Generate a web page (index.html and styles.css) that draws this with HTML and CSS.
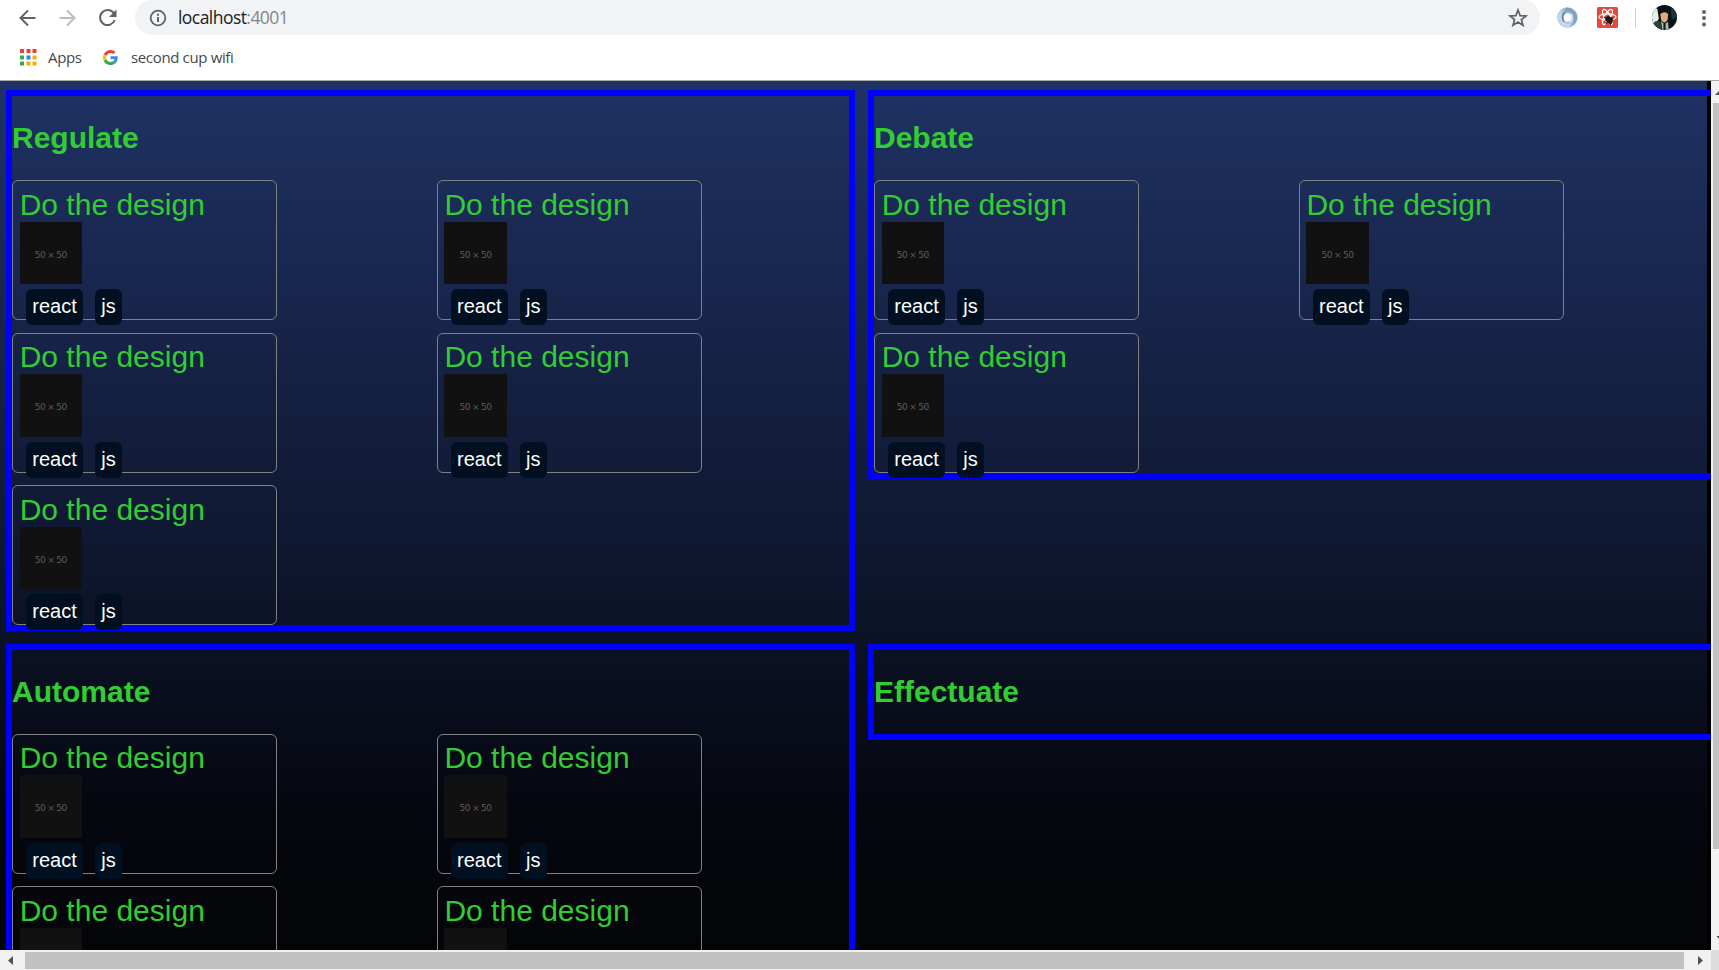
FILE: index.html
```html
<!DOCTYPE html>
<html lang="en">
<head>
<meta charset="utf-8">
<title>localhost:4001</title>
<link rel="stylesheet" href="styles.css">
</head>
<body>
<div class="browser">
  <header class="chrome">
    <div class="toolbar">
      <svg class="nav" viewBox="0 0 20 20"><path d="M18.500 10H4M11 2.500 3.500 10l7.500 7.500" fill="none" stroke="#5f6368" stroke-width="2"/></svg>
      <svg class="nav" viewBox="0 0 20 20"><path d="M2.500 10H17M10 2.500 17.500 10 10 17.500" fill="none" stroke="#babcbe" stroke-width="2"/></svg>
      <svg class="nav" viewBox="0 0 20 20"><path d="M16.700 5.200A7.500 7.500 0 1 0 17.700 12" fill="none" stroke="#5f6368" stroke-width="2"/><path d="M19.500 1.500V9H12z" fill="#5f6368"/></svg>
      <div class="omnibox">
        <svg class="info" viewBox="0 0 18 18"><circle cx="9" cy="9" r="7.300" fill="none" stroke="#5f6368" stroke-width="1.800"/><path d="M9 8v5M9 4.800v1.900" stroke="#5f6368" stroke-width="2"/></svg>
        <span class="url">localhost<span class="port">:4001</span></span>
        <svg class="star" viewBox="0 0 20 20"><path d="m10 2 2.100 5.600 6 .3-4.700 3.700 1.600 5.800-5-3.300-5 3.300 1.600-5.800L1.900 7.900l6-.3z" fill="none" stroke="#5f6368" stroke-width="1.700"/></svg>
      </div>
      <svg class="ext ring" viewBox="0 0 20 20"><circle cx="10" cy="10" r="6.900" fill="none" stroke="#a5bfd9" stroke-width="5.800"/><path d="M8 .8c6-1 11 3.500 11 9.200 0 3-1.500 6-4.500 7.700 2-3.700 2-9-1.500-12C11.500 4.200 9.500 4 7.500 4.600z" fill="#7ea1c6"/><path d="M12 19.200C6 20.200 1 15.700 1 10c0-3 1.500-6 4.500-7.700-2 3.700-2 9 1.500 12 1.500 1.500 3.500 1.700 5.500 1.100z" fill="#c6d7e8"/><path d="M6.500 14C4.500 11 5 7 8 4.500" fill="none" stroke="#527fb0" stroke-width="1.400"/><path d="M13.500 6c2 3 1.500 7-1.500 9.500" fill="none" stroke="#d8e4ef" stroke-width="1.200"/></svg>
      <svg class="ext" viewBox="0 0 21 21"><rect width="21" height="21" rx="1.500" fill="#e64a3b"/><g fill="none" stroke="#fff" stroke-width="1.200"><ellipse cx="10.500" cy="10" rx="8.500" ry="3.200"/><ellipse cx="10.500" cy="10" rx="8.500" ry="3.200" transform="rotate(60 10.500 10)"/><ellipse cx="10.500" cy="10" rx="8.500" ry="3.200" transform="rotate(120 10.500 10)"/></g><ellipse cx="12" cy="13" rx="3" ry="4.300" transform="rotate(-38 12 13)" fill="#231815"/><path d="m8 13 8-1M9 17l6-7M13 18l3-7M7 10l5 3" stroke="#231815" stroke-width="1.200"/></svg>
      <span class="divider"></span>
      <svg class="avatar" viewBox="0 0 24 24"><defs><clipPath id="face"><circle cx="12" cy="12" r="12"/></clipPath></defs><g clip-path="url(#face)"><path fill="#0b1114" d="M0 0h24v24H0z"/><path d="M0 5 5 3l1.500 10L4 18l-4-1z" fill="#e3efe8"/><path d="M18 3h6v9l-5 2z" fill="#17353b"/><path d="M8 9c1.500-2.500 6-3 7.500 0l-.5 5c-1 3.500-5 3.500-6.200.5z" fill="#e0ab78"/><path d="M8.500 15.500 12 18.500l3.500-2.500.5 8h-6z" fill="#a8b6ae"/><path d="M1 18c2-3 4-3 7-2l2 8H2z" fill="#2b4434"/><path d="M11 18h2v6h-2z" fill="#101719"/></g></svg>
      <svg class="dots" viewBox="0 0 6 18"><circle cx="3" cy="3" r="2" fill="#5f6368"/><circle cx="3" cy="9" r="2" fill="#5f6368"/><circle cx="3" cy="15.400" r="2" fill="#5f6368"/></svg>
    </div>
    <div class="bookmarks">
      <svg class="apps" viewBox="0 0 17 17"><path d="M0 0h4v4H0zM6.500 0h4v4h-4zM12.500 0h4v4h-4z" fill="#ea4335"/><path d="M0 6.500h4v4H0zM0 12.500h4v4H0z" fill="#34a853"/><path d="M6.500 6.500h4v4h-4z" fill="#1a8cf0"/><path d="M12.500 6.500h4v4h-4zM6.500 12.500h4v4h-4zM12.500 12.500h4v4h-4z" fill="#fbab05"/></svg>
      <span class="bm apps-label">Apps</span>
      <svg class="google" viewBox="0 0 48 48"><path fill="#ea4335" d="M24 9.500c3.500 0 6.700 1.200 9.200 3.600l6.900-6.900C35.900 2.400 30.500 0 24 0 14.600 0 6.500 5.400 2.600 13.200l8 6.200C12.400 13.700 17.700 9.500 24 9.500z"/><path fill="#4285f4" d="M47 24.600c0-1.600-.2-3.100-.4-4.600H24v9h12.900c-.6 3-2.300 5.500-4.800 7.200l7.700 6C44.400 38 47 31.800 47 24.600z"/><path fill="#fbbc05" d="M10.500 28.600a14.500 14.500 0 0 1 0-9.200l-8-6.200a24 24 0 0 0 0 21.600z"/><path fill="#34a853" d="M24 48c6.500 0 11.900-2.100 15.900-5.800l-7.700-6c-2.200 1.400-4.900 2.300-8.200 2.300-6.300 0-11.600-4.200-13.500-9.900l-8 6.200C6.500 42.600 14.600 48 24 48z"/></svg>
      <span class="bm wifi-label">second cup wifi</span>
    </div>
  </header>
  <div class="viewport">
    <main class="board" id="board"></main>
    <div class="vscroll">
      <svg class="vup" viewBox="0 0 8 22"><path d="M4 14l4-4v4z" fill="#505050"/></svg>
      <div class="vthumb"></div>
      <svg class="vdown" viewBox="0 0 8 22"><path d="M5.500 8H8v3z" fill="#505050"/></svg>
    </div>
  </div>
  <div class="hscroll">
    <svg class="harrow" viewBox="0 0 25 20"><path d="M13 6v9l-5-4.500z" fill="#505050"/></svg>
    <div class="hthumb"></div>
    <svg class="harrow right" viewBox="0 0 27 20"><path d="M14 6v9l5-4.500z" fill="#505050"/></svg>
    <div class="corner"></div>
  </div>
</div>
<script src="board.js"></script>
</body>
</html>
```
FILE: styles.css
```css
* { box-sizing: border-box; }
body { margin: 0; overflow: hidden; background: #fff; }
svg { display: block; flex: none; }
.browser { width: 1719px; height: 970px; display: flex; flex-direction: column; overflow: hidden; }

.chrome { height: 81px; flex: none; border-bottom: 1px solid #a9aaab; font-family: "Open Sans", "Noto Sans", sans-serif; }
.toolbar { height: 35px; display: flex; align-items: center; padding-left: 17px; }
.nav { width: 20px; height: 20px; margin-right: 20px; }
.omnibox { width: 1405px; height: 35px; margin-left: -2px; background: #f1f3f4; border-radius: 17.5px; display: flex; align-items: center; padding: 0 12.5px 0 14px; }
.info { width: 18px; height: 18px; }
.url { margin-left: 11px; flex: 1; font-size: 17.5px; line-height: 33px; padding-bottom: 1px; color: #202124; letter-spacing: -0.55px; }
.port { color: #80868b; }
.star { width: 20px; height: 20px; }
.ext { width: 21px; height: 21px; margin-left: 19px; }
.ring { margin-left: 17px; }
.divider { width: 1px; height: 20px; background: #cfd1d4; margin-left: 17px; }
.avatar { width: 25px; height: 25px; margin-left: 16px; }
.dots { width: 6px; height: 18px; margin-left: 24px; }
.bookmarks { height: 45px; display: flex; align-items: center; padding-left: 20px; }
.apps { width: 17px; height: 17px; }
.bm { font-size: 15px; line-height: 20px; padding-bottom: 2px; color: #45484b; white-space: nowrap; letter-spacing: -0.35px; }
.apps-label { margin-left: 11px; width: 55px; }
.google { width: 15px; height: 15px; }
.wifi-label { margin-left: 13px; }

.viewport { height: 869px; flex: none; display: flex; background: #000; }
.board {
  width: 1711px; flex: none; overflow: hidden; padding: 9px 0 0 6px;
  display: grid; grid-template-columns: 849px 849px; grid-template-rows: 541px 541px; gap: 12.5px 13px;
  align-items: start; align-content: start;
  background: linear-gradient(#1f3264, #0d1429 61%, #05070f 84%, #040507) no-repeat 0 0 / 1707px 100%, #000;
  font-family: "Liberation Sans", Arial, sans-serif; color: #32cd32;
}
.panel { border: 6px solid #00f; }
.panel-title { margin: 25px 0; font-size: 30px; line-height: 34px; font-weight: bold; }
.cards { display: grid; grid-template-columns: 1fr 1fr; gap: 12.5px; }
.card { width: 265px; height: 140px; border: 1px solid #808080; border-radius: 6px; padding: 6.7px; }
.card-title { font-size: 30px; line-height: 34px; white-space: nowrap; }
.thumb { width: 62.3px; height: 62.5px; background: #111; color: #5c5c5c; font: 9px/67px "DejaVu Sans", sans-serif; letter-spacing: -0.4px; word-spacing: -0.6px; text-align: center; }
.tags { display: flex; gap: 12px; padding: 5px 0 0 6.3px; }
.tag { height: 36px; padding: 0 6.25px; background: #001020; border-radius: 6px; color: #fff; font-size: 20px; line-height: 34px; }

.vscroll { width: 8px; background: #f1f1f1; display: flex; flex-direction: column; }
.vup { width: 8px; height: 22px; }
.vthumb { height: 746px; margin-left: 2px; background: #c1c1c1; }
.vdown { width: 8px; height: 22px; margin-top: auto; }
.hscroll { height: 20px; flex: none; display: flex; background: #f1f1f1; }
.harrow { width: 25px; height: 20px; }
.harrow.right { width: 27px; }
.hthumb { width: 1659px; height: 17px; margin-top: 2px; background: #c1c1c1; }
.corner { width: 8px; background: #dcdcdc; }
```
FILE: board.js
```js
const full = { size: "50 × 50", tags: ["react", "js"] };
const plain = { size: "", tags: [] };

const panels = [
  ["Regulate", [full, full, full, full, full]],
  ["Debate", [full, full, full]],
  ["Automate", [full, full, plain, plain]],
  ["Effectuate", []],
];

const card = ({ size, tags }) => `
  <article class="card">
    <div class="card-title">Do the design</div>
    <div class="thumb">${size}</div>
    <div class="tags">${tags.map((t) => `<span class="tag">${t}</span>`).join("")}</div>
  </article>`;

document.getElementById("board").innerHTML = panels.map(([title, cards]) => `
  <section class="panel">
    <h2 class="panel-title">${title}</h2>
    <div class="cards">${cards.map(card).join("")}</div>
  </section>`).join("");
```
